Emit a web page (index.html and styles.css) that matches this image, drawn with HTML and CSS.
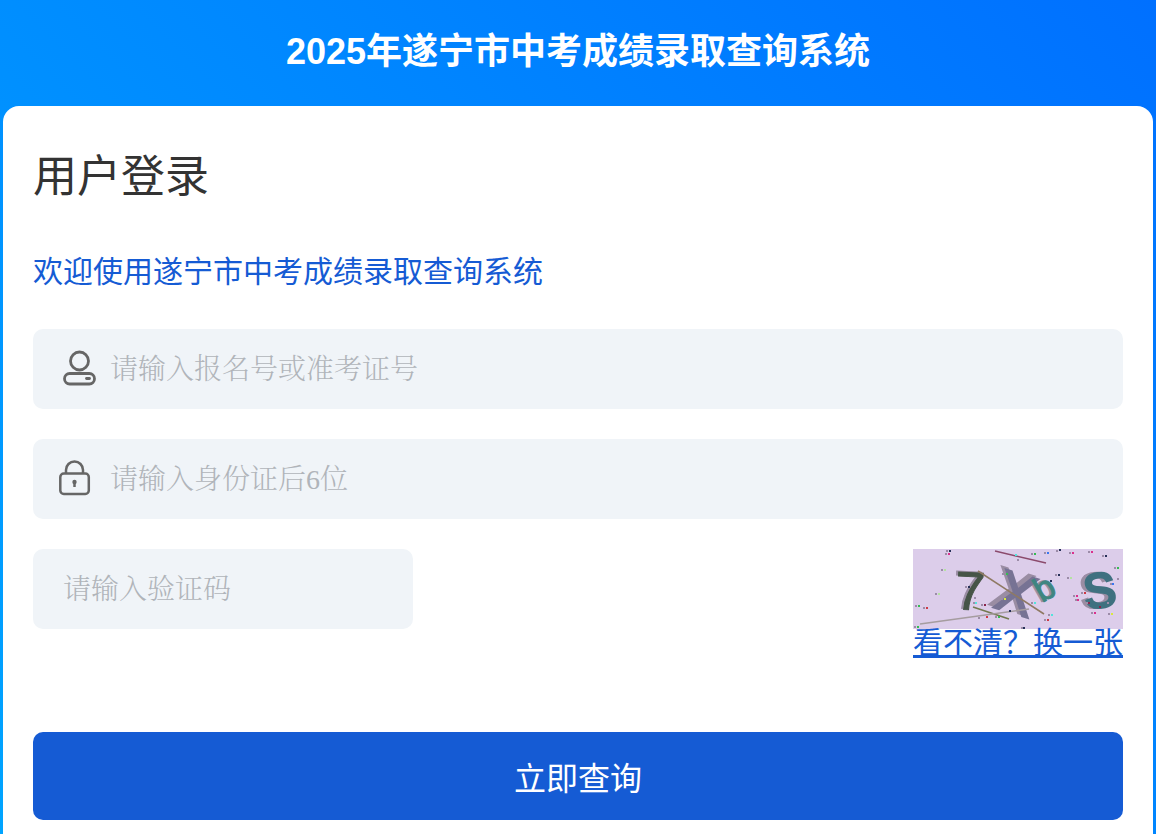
FILE: index.html
```html
<!DOCTYPE html>
<html lang="zh-CN">
<head>
<meta charset="utf-8">
<meta name="viewport" content="width=device-width, initial-scale=1">
<title>2025年遂宁市中考成绩录取查询系统</title>
<link rel="stylesheet" href="styles.css">
</head>
<body>
<header class="page-header">
  <h1 class="page-title">2025年遂宁市中考成绩录取查询系统</h1>
</header>
<main class="card">
  <h2 class="card-title">用户登录</h2>
  <p class="welcome">欢迎使用遂宁市中考成绩录取查询系统</p>
  <form class="form">
    <label class="field">
      <svg class="icon" viewBox="0 0 40 40" fill="none" stroke="#666" stroke-width="2.800" aria-hidden="true">
        <circle cx="23.500" cy="12" r="9"/>
        <rect x="8.500" y="24.500" width="30" height="10.500" rx="5.200"/>
        <path d="M30.500 29.500h3" stroke-linecap="round"/>
      </svg>
      <input class="input" type="text" aria-label="报名号或准考证号" placeholder="请输入报名号或准考证号">
    </label>
    <label class="field">
      <svg class="icon" viewBox="0 0 40 40" fill="none" stroke="#666" stroke-width="2.500" aria-hidden="true">
        <path d="M10 14v-3a8.500 8.500 0 0 1 17 0v3"/>
        <rect x="4.300" y="14.500" width="28.500" height="20.500" rx="3.500"/>
        <circle cx="18.500" cy="23" r="2.200" fill="#666" stroke="none"/>
        <path d="M18.500 23v5" stroke-width="2.500"/>
      </svg>
      <input class="input" type="text" aria-label="身份证后6位" placeholder="请输入身份证后6位">
    </label>
    <div class="captcha-row">
      <label class="field field-code">
        <input class="input" type="text" aria-label="验证码" placeholder="请输入验证码">
      </label>
      <div class="captcha">
        <svg class="captcha-image" viewBox="0 0 210 80" role="img" aria-label="验证码图片">
          <rect width="210" height="80" fill="#dccdea"/>
          <g class="captcha-shadow">
            <text font-size="54" transform="translate(39 59) rotate(3)">7</text>
            <text font-size="58" stroke-width="2" transform="translate(75 55) rotate(17)">X</text>
            <text font-size="34" transform="translate(127 54) rotate(-30)">b</text>
            <text font-size="48" stroke-width="3" transform="translate(169 60) rotate(-8)">S</text>
          </g>
          <g class="captcha-text">
            <text font-size="54" fill="#465447" stroke="#465447" transform="translate(41 60) rotate(3)">7</text>
            <text font-size="58" fill="#777394" stroke="#777394" stroke-width="2" transform="translate(79 58) rotate(17)">X</text>
            <text font-size="34" fill="#3f8580" stroke="#3f8580" transform="translate(129 54) rotate(-30)">b</text>
            <text font-size="48" fill="#3f7180" stroke="#3f7180" stroke-width="3" transform="translate(173 60) rotate(-8)">S</text>
          </g>
          <g fill="none">
            <path d="M82 2l51 12" stroke="#8b4a6c" stroke-width="1.500"/>
            <path d="M65 22l66 43" stroke="#8f7a63" stroke-width="1.500"/>
            <path d="M60 58l36 12" stroke="#73794f" stroke-width="1.500"/>
            <path d="M7 75l109-15" stroke="#a59c9f" stroke-width="1.500"/>
          </g>
          <path fill="#9c8ca8" d="M33 1h2v2h-2zM32 4h2v2h-2zM28 20h2v2h-2zM22 44h2v2h-2zM2 56h2v2h-2zM10 58h2v2h-2zM1 77h2v2h-2zM52 37h2v2h-2zM61 48h2v2h-2zM60 53h2v2h-2zM68 55h2v2h-2zM65 68h2v2h-2zM82 67h2v2h-2zM89 24h2v2h-2zM88 49h2v2h-2zM118 4h2v2h-2zM131 3h2v2h-2zM143 1h2v2h-2zM156 3h2v2h-2zM175 2h2v2h-2zM189 6h2v2h-2zM104 10h2v2h-2zM142 25h2v2h-2zM154 28h2v2h-2zM171 26h2v2h-2zM201 18h2v2h-2zM204 29h2v2h-2zM160 46h2v2h-2zM168 43h2v2h-2zM162 50h2v2h-2zM173 53h2v2h-2zM178 63h2v2h-2zM195 64h2v2h-2zM194 53h2v2h-2zM131 70h2v2h-2zM135 65h2v2h-2zM108 78h2v2h-2zM118 53h2v2h-2zM197 34h2v2h-2z"/>
          <path fill="#263058" d="M36 1h2v2h-2zM146 0h2v2h-2zM192 6h2v2h-2zM55 37h2v2h-2zM96 61h2v2h-2zM110 78h2v2h-2zM137 31h2v2h-2zM145 25h2v2h-2z"/>
          <path fill="#da318d" d="M35 4h2v2h-2zM159 3h2v2h-2zM163 46h2v2h-2zM164 50h2v2h-2zM181 63h2v2h-2zM178 2h2v2h-2z"/>
          <path fill="#35bd52" d="M5 56h2v2h-2zM4 77h2v2h-2zM121 4h2v2h-2zM93 24h2v2h-2zM85 67h2v2h-2zM204 18h2v2h-2z"/>
          <path fill="#3976f2" d="M134 3h2v2h-2zM199 34h2v2h-2z"/>
          <path fill="#cf3944" d="M13 58h2v2h-2zM73 67h2v2h-2zM134 70h2v2h-2zM171 43h2v2h-2z"/>
          <path fill="#51e4dc" d="M62 53h2v2h-2zM121 53h2v2h-2zM138 65h2v2h-2zM102 5h2v2h-2z"/>
          <path fill="#8a254c" d="M71 55h2v2h-2zM175 53h2v2h-2zM186 57h2v2h-2z"/>
          <path fill="#b4e3a1" d="M31 20h2v2h-2zM25 44h2v2h-2zM157 28h2v2h-2z"/>
          <path fill="#d9e940" d="M91 49h2v2h-2zM198 64h2v2h-2z"/>
        </svg>
        <a class="refresh" href="#">看不清？换一张</a>
      </div>
    </div>
    <button class="submit" type="submit">立即查询</button>
  </form>
</main>
</body>
</html>
```
FILE: styles.css
```css
* {
  box-sizing: border-box;
}

body {
  display: flex;
  flex-direction: column;
  min-height: 100vh;
  margin: 0;
  background: linear-gradient(45deg, #00a4ff, #0070ff);
  font-family: "Liberation Sans", "Noto Sans CJK SC", sans-serif;
}

.page-header {
  padding: 26px 16px 28px;
}

.page-title {
  margin: 0;
  color: #fff;
  font-size: 36px;
  line-height: 52px;
  text-align: center;
}

.card {
  flex: 1;
  margin: 0 3px;
  padding: 40px 30px 14px;
  border-radius: 16px 16px 0 0;
  background: #fff;
}

.card-title {
  margin: 0;
  color: #333;
  font-size: 44px;
  font-weight: 400;
  line-height: 62px;
}

.welcome {
  margin: 44px 0 0;
  color: #155bd4;
  font-size: 30px;
  line-height: 40px;
}

.form {
  display: flex;
  flex-direction: column;
  gap: 30px;
  margin-top: 37px;
}

.field {
  display: flex;
  align-items: center;
  gap: 14px;
  height: 80px;
  padding: 0 23px;
  border-radius: 10px;
  background: #f0f4f8;
}

.field-code {
  width: 380px;
  padding: 0 30px;
}

.icon {
  flex: none;
  width: 40px;
  height: 40px;
}

.input {
  flex: 1;
  min-width: 0;
  height: 100%;
  padding: 2px 0 0;
  border: 0;
  outline: 0;
  background: transparent;
  color: #333;
  font-family: "Liberation Serif", "Noto Serif CJK SC", "Noto Sans CJK SC", serif;
  font-size: 28px;
  font-weight: 300;
}

.input::placeholder {
  color: #b0b4ba;
  opacity: 1;
}

.captcha-row {
  display: flex;
  justify-content: space-between;
  align-items: flex-start;
}

.captcha {
  display: flex;
  flex-direction: column;
  width: 210px;
}

.captcha-image {
  display: block;
  width: 100%;
  overflow: visible;
}

.captcha-shadow {
  fill: #9a8da3;
  stroke: #9a8da3;
  stroke-width: 1;
}

.captcha-text {
  stroke-width: 1;
}

.refresh {
  color: #155bd4;
  font-size: 30px;
  line-height: 28px;
  white-space: nowrap;
  text-decoration: underline;
  text-decoration-thickness: 3px;
  text-underline-offset: 2px;
}

.submit {
  height: 88px;
  margin-top: 45px;
  border: 0;
  border-radius: 10px;
  background: #155bd4;
  color: #fff;
  font-family: inherit;
  font-size: 32px;
}
```
